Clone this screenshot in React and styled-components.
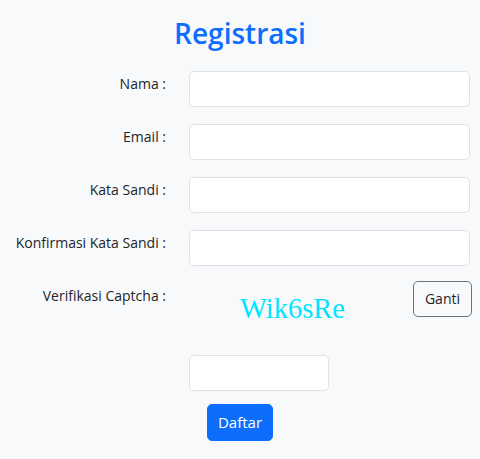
import React from 'react';
import styled, { createGlobalStyle } from 'styled-components';

const GlobalStyle = createGlobalStyle`
    body {
        margin: 0;
        background-color: #f8f9fa;
        font-family: "Open Sans", "Noto Sans", sans-serif;
        color: #212529;
    }
`;

const fields = ['Nama', 'Email', 'Kata Sandi', 'Konfirmasi Kata Sandi'];

export default function App() {
    return (<Page>
        <GlobalStyle />
        <Title>Registrasi</Title>
        <Form>
            {fields.map((name) => (
                <Row key={name}>
                    <Label>{name} :</Label>
                    <Input type={name.includes('Sandi') ? 'password' : 'text'} />
                </Row>
            ))}
            <Row>
                <Label>Verifikasi Captcha :</Label>
                <CaptchaBox>
                    <Captcha>Wik6sRe</Captcha>
                    <OutlineButton>Ganti</OutlineButton>
                </CaptchaBox>
            </Row>
            <Row $gapTop={13}>
                <span />
                <Input $width={140} />
            </Row>
        </Form>
        <Submit>Daftar</Submit>
    </Page>);
}

const Page = styled.div`
    width: 480px;
    min-height: 459px;
    box-sizing: border-box;
    padding-top: 17px;
    display: flex;
    flex-direction: column;
    align-items: center;
`;

const Title = styled.h1`
    margin: 0 0 20px;
    font-size: 28px;
    font-weight: 600;
    color: #0d6efd;
    line-height: 1.2;
`;

const Form = styled.div`
    width: 100%;
    display: flex;
    flex-direction: column;
    gap: 17px;
`;

const Row = styled.div`
    display: grid;
    grid-template-columns: 166px 1fr;
    column-gap: 23px;
    padding-right: 10px;
    margin-top: ${p => (p.$gapTop || 0)}px;
`;

const Label = styled.label`
    text-align: right;
    font-size: 14px;
    padding-top: 3px;
    line-height: 20px;
`;

const Input = styled.input`
    box-sizing: border-box;
    width: ${p => (p.$width ? `${p.$width}px` : '100%')};
    height: 36px;
    border: 1px solid #dee2e6;
    border-radius: 5px;
    background: #fff;
    padding: 6px 12px;
    font-size: 15px;
`;

const CaptchaBox = styled.div`
    display: flex;
    align-items: flex-start;
`;

const Captcha = styled.div`
    flex: 1;
    padding-top: 10px;
    padding-left: 51px;
    font-family: "Liberation Serif", serif;
    font-size: 28.5px;
    color: #00e5ff;
    line-height: 32px;
`;

const OutlineButton = styled.button`
    margin-top: -2px;
    margin-right: -2px;
    height: 36px;
    padding: 0 11px;
    border: 1px solid #6c757d;
    border-radius: 5px;
    background: transparent;
    color: #212529;
    font-family: inherit;
    font-size: 14px;
`;

const Submit = styled.button`
    margin-top: 13px;
    height: 37px;
    padding: 0 10px;
    border: 1px solid #0d6efd;
    border-radius: 5px;
    background: #0d6efd;
    color: #fff;
    font-family: inherit;
    font-size: 15px;
`;
